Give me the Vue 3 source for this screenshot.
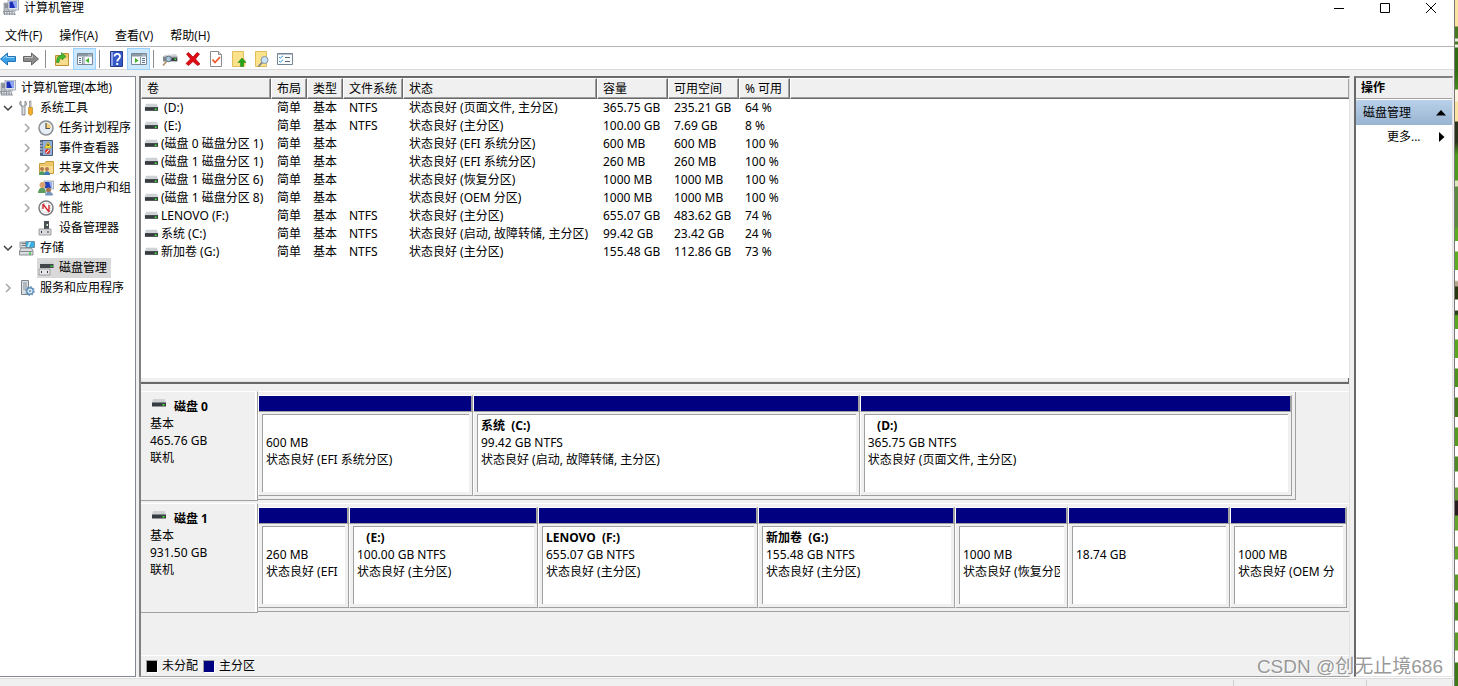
<script setup>
const icons = {
  computer: '<path d="M1 3h5v9H1z" fill="#b9bec4" stroke="#70767e" stroke-width=".6"/><path d="M2 5h3M2 7h3" stroke="#5c6168"/><path d="M5 0h10.500v10H5z" fill="#dfe3ea" stroke="#8a93a5" stroke-width=".7"/><path d="M6.500 1.500h7.500v6.500H6.500z" fill="#1c2fb8"/><path d="M9.500 1.500H14V8h-2z" fill="#8fa6f2"/><path d="M0 11h11l2 4.500H1z" fill="#8c949c"/><path d="M2 12.500h9M2 14h9" stroke="#e4e8ec" stroke-dasharray="1.500 1"/><path d="M8 10h5v1.500H8z" fill="#b0b5bd"/>',
  back: '<path d="M.5 8 7.500 2v3.500H15.500v5H7.500V14z" fill="#3ba0e6" stroke="#2474b4"/><path d="M3 7.500 6.500 4.500v2H14.500" stroke="#9fd6fb" fill="none"/>',
  forward: '<path d="M15.500 8 8.500 2v3.500H.5v5h8V14z" fill="#8b8b8b" stroke="#686868"/><path d="M1.500 6.500h8v-2" stroke="#c4c4c4" fill="none"/>',
  up: '<path d="M1.500 4.500h7l1-2h5v12h-13z" fill="#edc869" stroke="#bd9136"/><path d="M2 7h12v7H2z" fill="#f8dd8f"/><path d="M2.500 11.500c0-5 1.500-7 5-7V1.500L12 5.500 8 9V7C6 7 5.500 9 5 11.500z" fill="#46b82d" stroke="#2c8520" stroke-width=".6"/>',
  treepane: '<path d="M.5 2.500h15v11H.5z" fill="#f7fafc" stroke="#7a8794"/><path d="M1 3h14v2.500H1z" fill="#8b98a6"/><path d="M11.500 4h1m1 0h1" stroke="#fff"/><path d="M5.500 6v7M7 5.500v8" stroke="#8895a2"/><path d="M2 7.500h2m-2 2h2m-2 2h2" stroke="#5e7695"/><path d="M12 7v5L8.500 9.500z" fill="#3db325"/>',
  actionpane: '<path d="M.5 2.500h15v11H.5z" fill="#f7fafc" stroke="#7a8794"/><path d="M1 3h14v2.500H1z" fill="#8b98a6"/><path d="M11.500 4h1m1 0h1" stroke="#fff"/><path d="M9.500 6v7" stroke="#8895a2"/><path d="M11 7.500h3m-3 2h3m-3 2h3" stroke="#5e7695"/><path d="M4 7v5l3.500-2.500z" fill="#3db325"/>',
  help: '<path d="M2.500.5h12v15h-12z" fill="#3559c7" stroke="#25388c"/><path d="M3 1h2v14H3z" fill="#8ea4ea"/><path d="M6.500 5.500C6.500 2 12 2 12 5.500 12 8 9.200 8 9.200 10.500" fill="none" stroke="#fff" stroke-width="1.800"/><path d="M8.200 12h2v2h-2z" fill="#fff"/>',
  drivekey: '<path d="m3 4 11-1 1.500 2.500H1z" fill="#d0d4d8"/><path d="M1 5.500h14.500v5H1z" fill="#83898f"/><path d="M9 7h6v3H9z" fill="#3d4247"/><path d="M12.500 7.500h1.500V9h-1.500z" fill="#39e339"/><circle cx="6.500" cy="8" r="2.800" fill="#a8c5dc" stroke="#5f7180"/><path d="m4.500 10.500-3.500 4" stroke="#b08e66" stroke-width="1.600"/>',
  remove: '<path d="M1.500 3 3.500 1.500 8 6l4-4.500L14.500 3 10.500 8l4.500 5-2.500 1.500L8 10.500l-4.500 4L1 12.500 5.500 8z" fill="#e00b12" stroke="#a80006" stroke-width=".7"/>',
  check: '<path d="M2.500.5h8l3 3v12h-11z" fill="#fff" stroke="#8c8c8c"/><path d="M10.500.5v3h3" fill="#ddd" stroke="#8c8c8c"/><path d="m4.500 8.500 2.500 3 5-5.500" fill="none" stroke="#ee582c" stroke-width="1.800"/>',
  folderup: '<path d="M1.500.5h11v15h-11z" fill="#fde28c" stroke="#e2bd5c"/><path d="M12.500 8.500h2v7h-2z" fill="#f5d06d"/><path d="M11 7l4 4.500h-2.500v4h-3v-4H7z" fill="#25a51d" stroke="#16780f" stroke-width=".5"/>',
  foldersearch: '<path d="M1.500.5h11v15h-11z" fill="#fde28c" stroke="#e2bd5c"/><circle cx="10.500" cy="9" r="3.500" fill="#c8e2f3" stroke="#8299aa"/><path d="m8 11.500-3.500 4" stroke="#7c838a" stroke-width="1.800"/>',
  checklist: '<path d="M.5 2.500h15v11H.5z" fill="#fbfdff" stroke="#748596"/><path d="M1 2h14v1.500H1z" fill="#748596"/><path d="m2 6 1.200 1.200L6 4.800M2 10l1.200 1.200L6 8.800" fill="none" stroke="#2995df"/><path d="M8 6.500h5m-5 4h5" stroke="#596570"/>',
  tools: '<path d="M2 1v4l2 1.500L6 5V1c2 1 2 4 0 5.500V15H3V6.500C0 5 0 2 2 1z" fill="#d7dbe0" stroke="#747a80" stroke-width=".8"/><path d="M10.500 1h1.500v6h-1.500z" fill="#ddd" stroke="#777" stroke-width=".6"/><path d="M9.500 7.500h4V14l-2 1.500-2-1.500z" fill="#f4aa29" stroke="#b47c1a" stroke-width=".6"/>',
  clock: '<circle cx="8" cy="8" r="7" fill="#e6edf5" stroke="#8b8f94" stroke-width="1.500"/><path d="M8 8h5A5 5 0 0 0 8 3z" fill="#f8d07a"/><path d="M8 3v5.500h4" fill="none" stroke="#555" stroke-width="1.200"/>',
  events: '<path d="M2.500.5h12v15h-12z" fill="#91afd8" stroke="#4d5d79"/><path d="M3 1h2v14H3z" fill="#53678c"/><path d="M1.500 3h3m-3 3h3m-3 3h3m-3 3h3" stroke="#e6eaf0"/><path d="m10 2 3.500 6h-7z" fill="#ffe13b" stroke="#b49008" stroke-width=".6"/><path d="M10 4v2" stroke="#111"/><circle cx="9.500" cy="11.500" r="2.500" fill="#de3c37"/><path d="m8 13 3-3" stroke="#fff"/>',
  shared: '<path d="M1.500 3.500h5l1.500-2h7.500v12h-14z" fill="#ebc768" stroke="#c49a3b"/><path d="M2 6h13v7H2z" fill="#f7dd92"/><circle cx="4" cy="9" r="2" fill="#b37a52"/><circle cx="9" cy="9" r="2" fill="#b37a52"/><path d="M1 15c0-5 6-5 6 0z" fill="#499b63"/><path d="M6 15c0-5 6-5 6 0z" fill="#3f79bd"/>',
  users: '<path d="M6 1h9.500v8H6z" fill="#e1e5ed" stroke="#8790a2" stroke-width=".7"/><path d="M7 2h7v6H7z" fill="#2145bf"/><path d="M11 2h3v6h-1z" fill="#9aaeee"/><circle cx="4.500" cy="5" r="3" fill="#d9a26e"/><path d="M0 13c0-7 8-7 8 0z" fill="#5c9e62"/><circle cx="10.500" cy="10" r="2.500" fill="#a8744e"/><path d="M7 15.500c0-5 8-5 8 0z" fill="#7393bd"/>',
  perf: '<circle cx="8" cy="8" r="7" fill="#fff" stroke="#777c81" stroke-width="1.500"/><circle cx="8" cy="8" r="4.800" fill="none" stroke="#bbb" stroke-dasharray="1 1"/><path d="m5 4 6 8M5 4v5m6-4v7" stroke="#cf2931" stroke-width="1.400"/>',
  device: '<path d="M6 1h5v8H6z" fill="#4b5055"/><path d="M8.500 4H10v2H8.500z" fill="#d7f5d7"/><path d="M1 9h12v6H1z" fill="#d8dadd" stroke="#8a8e92" stroke-width=".8"/><path d="M3.500 11v2M10 11v2" stroke="#333"/>',
  storage: '<path d="M1 2h8v6H1z" fill="#dde1e5" stroke="#858b90" stroke-width=".8"/><path d="M2.500 3.500h5m-5 2h5" stroke="#777"/><path d="M7 1.500h8.500v6H7z" fill="#38afe0" stroke="#667f91" stroke-width=".8"/><path d="M10 2h2l-2 5H8z" fill="#b9e9fb"/><path d="m2 8-1.500 3v4H14v-4l-1.500-3z" fill="#d9dde0" stroke="#747a80" stroke-width=".8"/><path d="M1 11.500h12.500" stroke="#888"/><path d="M10 12.500h2v2h-2z" fill="#2dcf40"/>',
  diskmgmt: '<path d="m3 2 11-1 1.500 3H2z" fill="#cfd2d5"/><path d="M2 4h13.500v4H2z" fill="#41464b"/><path d="M12.500 5.500h2V7h-2z" fill="#39e339"/><path d="M1 9h11v6H1z" fill="#e6e7e8" stroke="#8a8e92" stroke-width=".8"/><path d="M3.500 11v2M9.500 11v2" stroke="#333"/>',
  services: '<path d="M2.500.5h7v14h-7z" fill="#d9dee3" stroke="#7e858c"/><path d="M4 3h4M4 5h4M4 7h4M4 9h4" stroke="#8a939b"/><circle cx="11" cy="11" r="3.200" fill="#dbe9f5" stroke="#5d8cb7" stroke-width="1.400"/><circle cx="11" cy="11" r="4.500" fill="none" stroke="#5d8cb7" stroke-dasharray="1.500 2"/><circle cx="11" cy="11" r="1" fill="#5d8cb7"/>',
  drive: '<path d="M2 3h12l1 4H1z" fill="#cfd3d6"/><path d="M1 6.500h14v4H1z" fill="#373c40"/><path d="M11.500 8h2v1.500h-2z" fill="#3dff3d"/>',
}
const menus = ['文件(F)', '操作(A)', '查看(V)', '帮助(H)']
const tools = [
  ['back', '后退'], ['forward', '前进'], null, ['up', '上移'], ['treepane', '控制台树', true], null,
  ['help', '帮助'], ['actionpane', '操作窗格', true], null, ['drivekey', '磁盘'], ['remove', '删除'],
  ['check', '属性'], ['folderup', '打开'], ['foldersearch', '浏览'], ['checklist', '列表'],
]
const tree = [
  { t: '计算机管理(本地)', i: 'computer', l: 0 },
  { t: '系统工具', i: 'tools', l: 1, open: true },
  { t: '任务计划程序', i: 'clock', l: 2, closed: true },
  { t: '事件查看器', i: 'events', l: 2, closed: true },
  { t: '共享文件夹', i: 'shared', l: 2, closed: true },
  { t: '本地用户和组', i: 'users', l: 2, closed: true },
  { t: '性能', i: 'perf', l: 2, closed: true },
  { t: '设备管理器', i: 'device', l: 2 },
  { t: '存储', i: 'storage', l: 1, open: true },
  { t: '磁盘管理', i: 'diskmgmt', l: 2, sel: true },
  { t: '服务和应用程序', i: 'services', l: 1, closed: true },
]
const heads = ['卷', '布局', '类型', '文件系统', '状态', '容量', '可用空间', '% 可用', '']
const volumes = [
  ['\u00a0(D:)', 'NTFS', '状态良好 (页面文件, 主分区)', '365.75 GB', '235.21 GB', '64 %'],
  ['\u00a0(E:)', 'NTFS', '状态良好 (主分区)', '100.00 GB', '7.69 GB', '8 %'],
  ['(磁盘 0 磁盘分区 1)', '', '状态良好 (EFI 系统分区)', '600 MB', '600 MB', '100 %'],
  ['(磁盘 1 磁盘分区 1)', '', '状态良好 (EFI 系统分区)', '260 MB', '260 MB', '100 %'],
  ['(磁盘 1 磁盘分区 6)', '', '状态良好 (恢复分区)', '1000 MB', '1000 MB', '100 %'],
  ['(磁盘 1 磁盘分区 8)', '', '状态良好 (OEM 分区)', '1000 MB', '1000 MB', '100 %'],
  ['LENOVO (F:)', 'NTFS', '状态良好 (主分区)', '655.07 GB', '483.62 GB', '74 %'],
  ['系统 (C:)', 'NTFS', '状态良好 (启动, 故障转储, 主分区)', '99.42 GB', '23.42 GB', '24 %'],
  ['新加卷 (G:)', 'NTFS', '状态良好 (主分区)', '155.48 GB', '112.86 GB', '73 %'],
]
const disks = [
  {
    name: '磁盘 0', size: '465.76 GB', share: 95.1,
    parts: [
      { w: 215, n: '', s: '600 MB', d: '状态良好 (EFI 系统分区)' },
      { w: 387, n: '系统\u00a0 (C:)', s: '99.42 GB NTFS', d: '状态良好 (启动, 故障转储, 主分区)' },
      { w: 432, n: '\u00a0\u00a0 (D:)', s: '365.75 GB NTFS', d: '状态良好 (页面文件, 主分区)' },
    ],
  },
  {
    name: '磁盘 1', size: '931.50 GB', share: 100,
    parts: [
      { w: 91, n: '', s: '260 MB', d: '状态良好 (EFI' },
      { w: 189, n: '\u00a0\u00a0 (E:)', s: '100.00 GB NTFS', d: '状态良好 (主分区)' },
      { w: 220, n: 'LENOVO\u00a0 (F:)', s: '655.07 GB NTFS', d: '状态良好 (主分区)' },
      { w: 197, n: '新加卷\u00a0 (G:)', s: '155.48 GB NTFS', d: '状态良好 (主分区)' },
      { w: 113, n: '', s: '1000 MB', d: '状态良好 (恢复分区)' },
      { w: 162, n: '', s: '18.74 GB', d: '' },
      { w: 117, n: '', s: '1000 MB', d: '状态良好 (OEM 分' },
    ],
  },
]
</script>

<template>
  <div class="desktop">
    <div class="window">
      <header class="title">
        <svg class="ic" viewBox="0 0 16 16" v-html="icons.computer"></svg>
        <span class="caption">计算机管理</span>
        <button class="win" aria-label="最小化"><svg viewBox="0 0 12 12"><path d="M1 6.500h10" /></svg></button>
        <button class="win" aria-label="最大化"><svg viewBox="0 0 12 12"><path d="M1.500 1.500h9v9h-9z" /></svg></button>
        <button class="win" aria-label="关闭"><svg viewBox="0 0 12 12"><path d="m1 1 10 10M11 1 1 11" /></svg></button>
      </header>
      <nav class="menu"><button v-for="m in menus" :key="m">{{ m }}</button></nav>
      <div class="toolbar">
        <template v-for="(t, k) in tools" :key="k">
          <button v-if="t" :class="{ on: t[2] }" :aria-label="t[1]"><svg class="ic" viewBox="0 0 16 16" v-html="icons[t[0]]"></svg></button>
          <span v-else class="sep"></span>
        </template>
      </div>

      <main class="panes">
        <ul class="tree">
          <li v-for="n in tree" :key="n.t" :class="'l' + n.l">
            <span v-if="n.l" class="chev">
              <svg v-if="n.open" class="open" viewBox="0 0 10 10"><path d="m1 3 4 4 4-4" /></svg>
              <svg v-if="n.closed" class="closed" viewBox="0 0 10 10"><path d="m3 1 4 4-4 4" /></svg>
            </span>
            <button :class="{ sel: n.sel }"><svg class="ic" viewBox="0 0 16 16" v-html="icons[n.i]"></svg><span>{{ n.t }}</span></button>
          </li>
        </ul>

        <section class="center">
          <div class="list">
            <table>
              <colgroup><col v-for="(h, k) in heads" :key="k" :class="'c' + k" /></colgroup>
              <thead><tr><th v-for="(h, k) in heads" :key="k">{{ h }}</th></tr></thead>
              <tbody>
                <tr v-for="v in volumes" :key="v[0]">
                  <td class="vol"><svg class="ic" viewBox="0 0 16 16" v-html="icons.drive"></svg>{{ v[0] }}</td>
                  <td>简单</td><td>基本</td><td>{{ v[1] }}</td><td>{{ v[2] }}</td><td>{{ v[3] }}</td><td>{{ v[4] }}</td><td>{{ v[5] }}</td><td></td>
                </tr>
              </tbody>
            </table>
          </div>
          <div class="splitter"></div>
          <div class="disks">
            <div v-for="d in disks" :key="d.name" class="disk">
              <div class="label">
                <b><svg class="ic" viewBox="0 0 16 16" v-html="icons.drive"></svg>{{ d.name }}</b>
                <span>基本</span><span>{{ d.size }}</span><span>联机</span>
              </div>
              <div class="track">
                <div class="parts" :class="{ full: d.share === 100 }" :style="{ width: d.share + '%' }">
                  <div v-for="(p, k) in d.parts" :key="k" class="part" :style="{ flexGrow: p.w }">
                    <div class="band"></div>
                    <div class="body"><div class="inner"><div class="clip"><b>{{ p.n }}</b><span>{{ p.s }}</span><span>{{ p.d }}</span></div></div></div>
                  </div>
                </div>
              </div>
            </div>
          </div>
          <div class="legend"><i class="black"></i><span>未分配</span><i class="navy"></i><span>主分区</span></div>
        </section>

        <aside class="actions">
          <h2>操作</h2>
          <button class="group">磁盘管理<svg viewBox="0 0 10 6"><path d="M5 0l5 5.500H0z" /></svg></button>
          <button class="more">更多...<svg viewBox="0 0 6 10"><path d="M0 0l5.500 5L0 10z" /></svg></button>
        </aside>
      </main>
      <footer class="status"><span></span><span></span><span></span></footer>
    </div>
    <div class="wallpaper"></div>
    <div class="mark">CSDN @创无止境686</div>
  </div>
</template>

<style>
body { margin: 0; }
</style>

<style scoped>
* { box-sizing: border-box; }
.desktop { position: relative; display: flex; min-height: 100vh; overflow: hidden; font: 12px/18px "Noto Sans", "Noto Sans CJK SC", sans-serif; color: #000; }
.window { flex: 1; min-width: 0; display: flex; flex-direction: column; background: #f0f0f0; }
button { font: inherit; color: inherit; border: 0; background: none; padding: 0; margin: 0; text-align: left; }
.ic { width: 16px; height: 16px; flex: none; display: block; }
.title, .menu, .toolbar, .tree, .actions { font-family: "Open Sans", "Noto Sans CJK SC", sans-serif; }
.title { height: 15px; display: flex; align-items: center; background: #fff; padding-left: 3px; }
.caption { flex: 1; padding-left: 5px; }
.win { width: 46px; height: 15px; display: flex; justify-content: center; align-items: center; }
.win svg { width: 12px; height: 12px; fill: none; stroke: #000; }
.menu { display: flex; gap: 17px; padding: 12px 5px 1px; background: #fff; height: 31px; }
.toolbar { display: flex; align-items: center; height: 24px; background: #fff; border-top: 1px solid #b4b4b4; border-bottom: 1px solid #dadada; padding-top: 1px; }
.toolbar button { width: 23px; height: 22px; flex: none; display: flex; align-items: center; justify-content: center; }
.toolbar button:first-child { margin-left: -4px; }
.toolbar .on { background: #cce8ff; border: 1px solid #99d1ff; }
.sep { width: 1px; height: 18px; margin: 0 4px 0 3px; background: #8d8d8d; }
.panes { flex: 1; display: flex; padding: 6px 1px 0 0; min-height: 0; }
.tree { width: 136px; flex: none; margin: 0; padding: 1px 0 0; list-style: none; background: #fff; border: solid #828790; border-width: 1px 1px 1px 0; overflow: hidden; }
.tree li { height: 20px; display: flex; align-items: center; white-space: nowrap; }
.tree li.l2 { padding-left: 19px; }
.tree button { display: flex; align-items: center; height: 20px; padding-right: 4px; }
.tree button span { padding-left: 5px; }
.tree .l1 button, .tree .l2 button { padding-left: 1px; }
.tree .sel { background: #d9d9d9; }
.chev { width: 18px; padding-left: 3px; flex: none; }
.chev svg { width: 10px; height: 10px; display: block; fill: none; stroke-width: 1.5; }
.open { stroke: #404040; }
.closed { stroke: #a6a6a6; }
.center { flex: 1; min-width: 0; margin: 0 4px 0 3px; display: flex; flex-direction: column; border: solid; border-width: 2px 1px 1px 2px; border-color: #696969 #e3e3e3 #a0a0a0 #808080; }
.list { height: 300px; background: #fff; overflow: hidden; }
table { width: 100%; table-layout: fixed; border-collapse: separate; border-spacing: 0; }
th { height: 21px; padding: 0 5px; text-align: left; font-weight: 400; line-height: 18px; background: #f0f0f0; border: 1px solid; border-color: #fff #696969 #696969 #fff; box-shadow: inset -1px -1px #a0a0a0; white-space: nowrap; }
th:last-child { border-right: 0; }
td { height: 18px; padding: 0 6px; white-space: nowrap; overflow: hidden; line-height: 18px; }
td.vol { padding: 0 0 0 3px; display: flex; align-items: center; gap: 2px; }
td.vol .ic { width: 15px; height: 15px; }
.c0 { width: 130px; }
.c1, .c2 { width: 36px; }
.c3 { width: 60px; }
.c4 { width: 194px; }
.c5, .c6 { width: 71px; }
.c7 { width: 51px; }
.splitter { height: 6px; background: #f0f0f0; border-bottom: 2px solid #696969; border-right: 1px solid #696969; box-shadow: inset 0 -1px #e3e3e3; }
.disks { flex: 1; padding-top: 7px; display: flex; flex-direction: column; gap: 2px; }
.disk { display: flex; height: 110px; line-height: 17px; }
.label { width: 117px; flex: none; display: flex; flex-direction: column; padding: 6px 0 0 9px; border: solid; border-width: 1px 1px 1px 0; border-color: #fff #a0a0a0 #a0a0a0; box-shadow: inset -2px 0 #fff; }
.label b { display: flex; align-items: flex-start; gap: 7px; height: 17px; padding-left: 1px; }
.label b .ic { margin-top: -2px; }
.track { flex: 1; min-width: 0; border-top: 1px solid #fff; height: 109px; }
.parts { display: flex; height: 108px; padding: 3px 3px 3px 0; border-right: 1px solid #a0a0a0; border-bottom: 1px solid #a0a0a0; }
.parts.full { border-right: 0; padding-right: 2px; }
.part { flex-basis: 0; min-width: 0; display: flex; flex-direction: column; }
.band { height: 17px; background: #000080; border: solid; border-width: 1px 2px 1px 1px; border-color: #fff #a0a0a0 #a0a0a0 #fff; }
.body { flex: 1; padding: 2px 3px 3px 3px; border: solid; border-width: 0 1px 1px 1px; border-color: #a0a0a0 #a0a0a0 #a0a0a0 #fff; }
.inner { height: 100%; background: #fff; border-top: 1px solid #a0a0a0; border-left: 1px solid #a0a0a0; padding: 2px 4px 0 3px; }
.clip { overflow: hidden; white-space: nowrap; }
.clip b, .clip span { display: block; height: 17px; }
.legend { height: 21px; display: flex; align-items: center; border-top: 1px solid #fff; padding: 0 0 0 5px; gap: 4px; }
.legend i { width: 12px; height: 13px; border: 1px solid; border-color: #a0a0a0 #fff #fff #a0a0a0; }
.legend .navy { margin-left: 1px; }
.black { background: #000; }
.navy { background: #000080; }
.actions { width: 99px; flex: none; background: #fff; border: solid; border-width: 2px 1px 1px 2px; border-color: #808080 #e3e3e3 #e3e3e3 #696969; }
.actions h2 { margin: 0; height: 21px; padding-left: 5px; font-size: 12px; line-height: 20px; background: #f0f0f0; border-bottom: 1px solid #a0a0a0; }
.actions button { width: 100%; display: flex; align-items: center; justify-content: space-between; padding: 0 6px 0 7px; }
.actions .group { height: 25px; margin-top: 1px; background: linear-gradient(#b9d1ea, #99b4d1); }
.group svg { width: 10px; height: 6px; }
.actions .more { height: 24px; padding: 0 7px 0 31px; }
.more svg { width: 6px; height: 10px; }
.status { height: 9px; display: flex; justify-content: flex-end; padding-top: 1px; border-top: 1px solid #fff; box-shadow: inset 0 1px #dcdcdc; }
.status span { border-left: 1px solid #d0d0d0; width: 86px; margin-top: 1px; }
.status span:first-child { width: 133px; }
.status span:last-child { width: 2px; }
.wallpaper { width: 4px; flex: none; border-left: 1px solid #777; background: linear-gradient(#fbe4a2 0 26px, #477a20 27px 38px, #e8f0dd 39px 41px, #477a20 42px 44px, #e8f0dd 45px 47px, #2f6c12 48px 70px, #438b1b 89px, #fbf5df 90px 101px, #fbe4a2 102px 121px, #29331c 122px 142px, #4e9c1c 155px 180px, #dce7bd 181px 186px, #5a8c3d 187px 226px, #5cad1f 230px 241px, #fff 241px 251px, #5eae22 252px 270px, #fff 270px 280px, #b3a58a 282px 286px, #27380f 287px 299px, #fff 300px 310px, #26401a 311px 314px, #5aa81e 316px 329px, #fff 329px 339px, #5aa81e 340px 358px, #fff 358px 368px, #4c941b 369px 387px, #fff 387px 397px, #447c1a 398px 417px, #fff 417px 427px, #549d20 428px 446px, #fff 446px 456px, #508c24 457px 471px, #fff 472px 487px, #659c34 488px 500px, #281c20 501px 515px, #63a42b 516px 530px, #fff 531px 546px, #63a42b 547px 559px, #fff 560px 574px, #5b9b25 575px 590px, #fff 591px 602px, #4d8d1d 603px 620px, #fff 621px 632px, #5b9b25 633px 650px, #fff 651px 662px, #3e7a16 663px); }
.mark { position: absolute; right: 15px; bottom: 6px; font: 19px/26px "Liberation Sans", "Noto Sans CJK SC", sans-serif; color: #999; text-shadow: 1px 1px #fff; }
</style>
